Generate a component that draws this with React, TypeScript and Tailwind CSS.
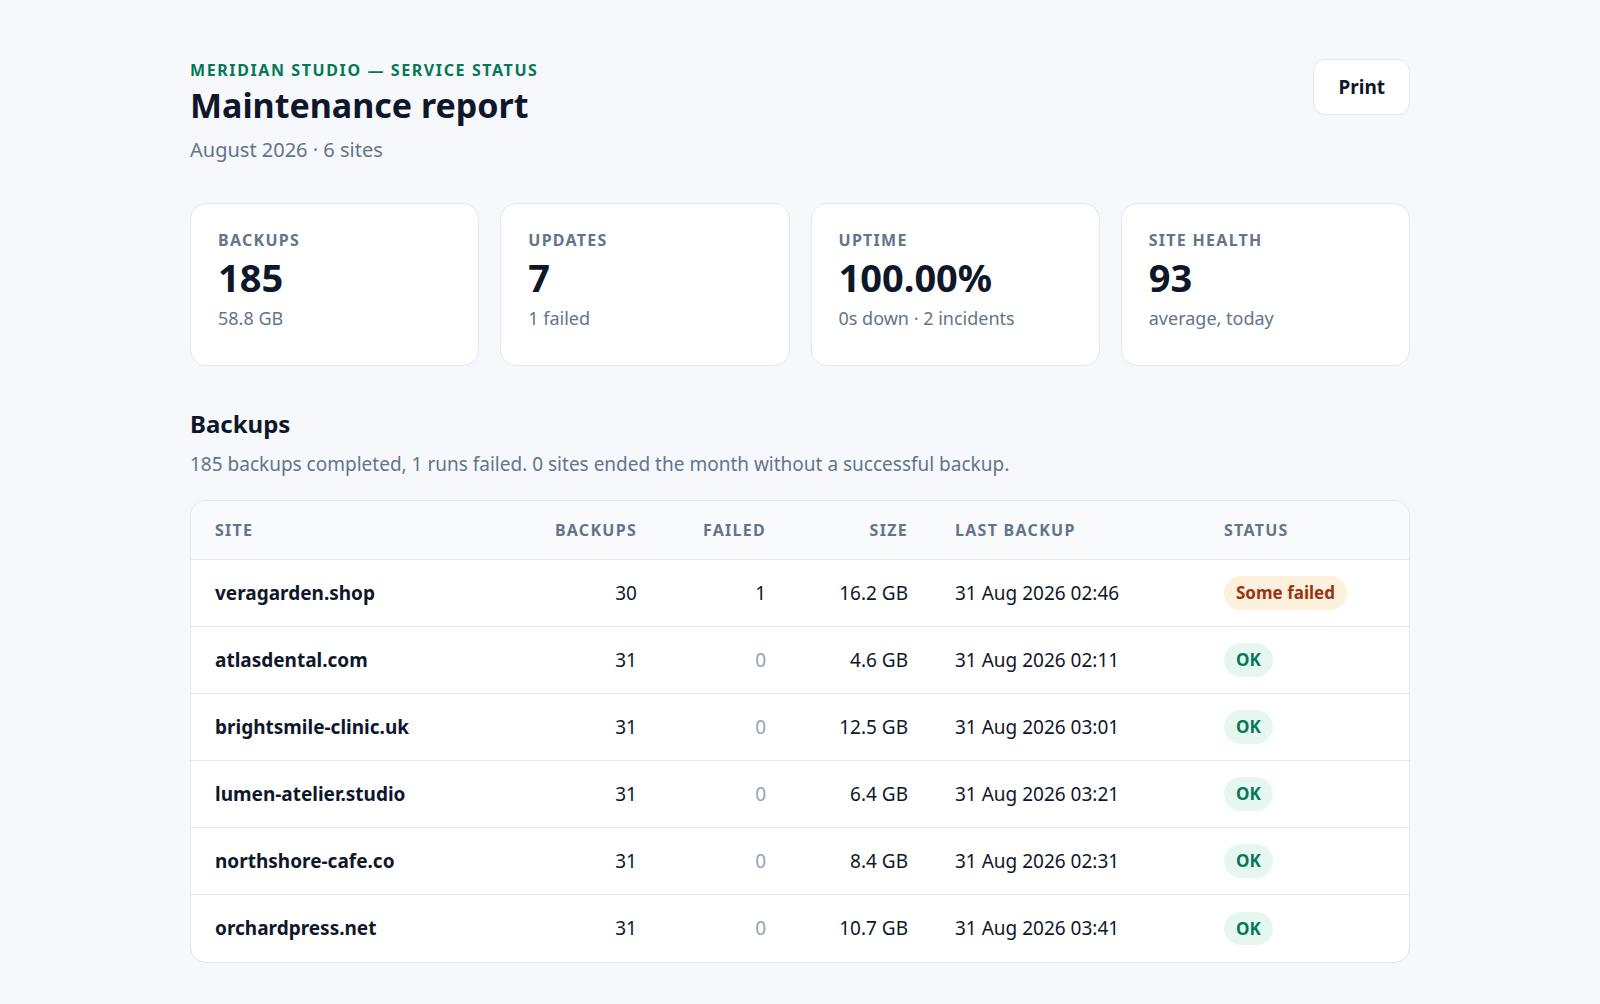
import React from "react";

const stats = [
  { label: "Backups", value: "185", sub: "58.8 GB" },
  { label: "Updates", value: "7", sub: "1 failed" },
  { label: "Uptime", value: "100.00%", sub: "0s down · 2 incidents" },
  { label: "Site health", value: "93", sub: "average, today" },
];

const rows = [
  { site: "veragarden.shop", backups: 30, failed: 1, size: "16.2 GB", last: "31 Aug 2026 02:46", ok: false },
  { site: "atlasdental.com", backups: 31, failed: 0, size: "4.6 GB", last: "31 Aug 2026 02:11", ok: true },
  { site: "brightsmile-clinic.uk", backups: 31, failed: 0, size: "12.5 GB", last: "31 Aug 2026 03:01", ok: true },
  { site: "lumen-atelier.studio", backups: 31, failed: 0, size: "6.4 GB", last: "31 Aug 2026 03:21", ok: true },
  { site: "northshore-cafe.co", backups: 31, failed: 0, size: "8.4 GB", last: "31 Aug 2026 02:31", ok: true },
  { site: "orchardpress.net", backups: 31, failed: 0, size: "10.7 GB", last: "31 Aug 2026 03:41", ok: true },
];

const cols = "grid grid-cols-[276px_146px_129px_142px_316px_1fr] px-6 items-center";

const App: React.FC = () => {
  return (
    <div className="min-h-screen bg-[#f6f8fb] font-[family-name:'DejaVu_Sans',sans-serif] text-[#0f172a]">
      <div className="w-[1220px] mx-auto pt-[58px] pb-10">
        <div className="flex justify-between items-start">
          <div>
            <div className="text-[16px] font-bold tracking-[0.1em] text-[#047857] uppercase">
              Meridian Studio — Service Status
            </div>
            <h1 className="text-[34px] font-bold mt-[2px] leading-tight">Maintenance report</h1>
            <div className="text-[20px] text-[#64748b] mt-[8px]">August 2026 · 6 sites</div>
          </div>
          <button className="mt-[1px] px-6 h-[56px] bg-white border border-[#e2e8f0] rounded-xl text-[19px] font-bold">
            Print
          </button>
        </div>

        <div className="grid grid-cols-4 gap-[21px] mt-[38px]">
          {stats.map((s) => (
            <div key={s.label} className="bg-white border border-[#e2e8f0] rounded-2xl h-[163px] px-[27px] pt-[24px]">
              <div className="text-[16px] font-bold tracking-[0.08em] uppercase text-[#64748b]">{s.label}</div>
              <div className="text-[38px] font-bold leading-tight mt-[2px]">{s.value}</div>
              <div className="text-[18px] text-[#64748b] mt-[4px]">{s.sub}</div>
            </div>
          ))}
        </div>

        <h2 className="text-[24px] font-bold mt-[40px]">Backups</h2>
        <p className="text-[19px] text-[#64748b] mt-[8px]">
          185 backups completed, 1 runs failed. 0 sites ended the month without a successful backup.
        </p>

        <div className="mt-[22px] bg-white border border-[#e2e8f0] rounded-2xl overflow-hidden">
          <div className={`${cols} h-[59px] bg-[#f8fafc] border-b border-[#e2e8f0] text-[16px] font-bold tracking-[0.08em] uppercase text-[#64748b]`}>
            <div>Site</div>
            <div className="text-right">Backups</div>
            <div className="text-right">Failed</div>
            <div className="text-right">Size</div>
            <div className="pl-[47px]">Last backup</div>
            <div>Status</div>
          </div>
          {rows.map((r, i) => (
            <div
              key={r.site}
              className={`${cols} h-[67px] text-[19px] ${i < rows.length - 1 ? "border-b border-[#e2e8f0]" : ""}`}
            >
              <div className="font-bold">{r.site}</div>
              <div className="text-right">{r.backups}</div>
              <div className={`text-right ${r.failed ? "" : "text-[#94a3b8]"}`}>{r.failed}</div>
              <div className="text-right">{r.size}</div>
              <div className="pl-[47px]">{r.last}</div>
              <div>
                {r.ok ? (
                  <span className="inline-block px-3 py-[4px] rounded-full bg-[#e6f7ef] text-[#047857] text-[17px] font-bold">OK</span>
                ) : (
                  <span className="inline-block px-3 py-[4px] rounded-full bg-[#fdf0dc] text-[#9a3412] text-[17px] font-bold">Some failed</span>
                )}
              </div>
            </div>
          ))}
        </div>
      </div>
    </div>
  );
};

export default App;
